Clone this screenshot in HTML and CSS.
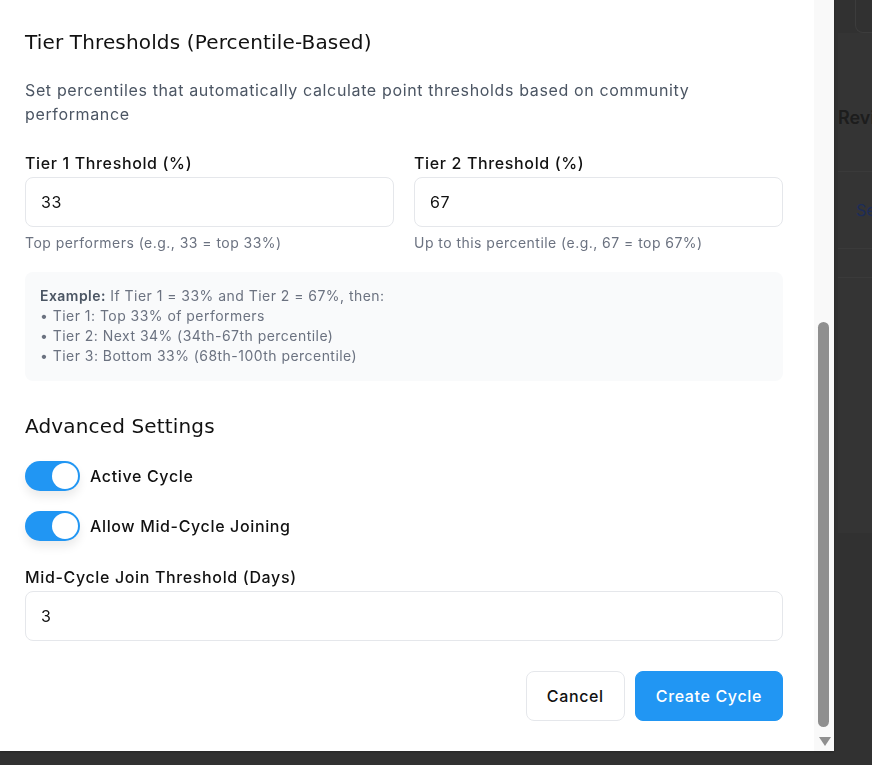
FILE: index.html
```html
<!DOCTYPE html>
<html lang="en">
<head>
<meta charset="utf-8">
<title>Create Cycle</title>
<link rel="stylesheet" href="styles.css">
</head>
<body>
  <div class="page">
    <div class="page-side"></div>
    <main class="page-main">
      <div class="page-card"></div>
      <div class="page-panel">
        <h2 class="page-panel-title">Reviews</h2>
        <div class="page-row"><a class="page-link">See all</a></div>
        <div class="page-row page-row-thin"></div>
      </div>
    </main>
  </div>

  <div class="backdrop"></div>

  <div class="modal" role="dialog" aria-label="Create Cycle">
    <div class="modal-scroll">
      <div class="modal-body">
        <header class="modal-header">
          <h2 class="modal-title">Create New Cycle</h2>
        </header>

        <section class="section">
          <h3 class="section-title">Basic Information</h3>
          <div class="field">
            <label class="label">Cycle Name</label>
            <input class="input" value="Q3 2025 Performance Cycle">
          </div>
          <div class="field">
            <label class="label">Description</label>
            <textarea class="input textarea">Quarterly performance cycle for the community.</textarea>
          </div>
          <div class="grid-2">
            <div class="field">
              <label class="label">Start Date</label>
              <input class="input" value="2025-07-01">
            </div>
            <div class="field">
              <label class="label">End Date</label>
              <input class="input" value="2025-09-30">
            </div>
          </div>
        </section>

        <section class="section">
          <h3 class="section-title">Point Settings</h3>
          <div class="grid-2">
            <div class="field">
              <label class="label">Points per Activity</label>
              <input class="input" value="10">
            </div>
            <div class="field">
              <label class="label">Bonus Points</label>
              <input class="input" value="5">
            </div>
          </div>
          <div class="grid-2">
            <div class="field">
              <label class="label">Minimum Points</label>
              <input class="input" value="0">
            </div>
            <div class="field">
              <label class="label">Maximum Points</label>
              <input class="input" value="1000">
            </div>
          </div>
        </section>

        <section class="section">
          <h3 class="section-title">Tier Thresholds (Percentile-Based)</h3>
          <p class="section-desc">Set percentiles that automatically calculate point thresholds based on community performance</p>
          <div class="grid-2 grid-tiers">
            <div class="field">
              <label class="label">Tier 1 Threshold (%)</label>
              <input class="input" value="33">
              <span class="hint">Top performers (e.g., 33 = top 33%)</span>
            </div>
            <div class="field">
              <label class="label">Tier 2 Threshold (%)</label>
              <input class="input" value="67">
              <span class="hint">Up to this percentile (e.g., 67 = top 67%)</span>
            </div>
          </div>
          <div class="example">
            <div><strong>Example:</strong> If Tier 1 = 33% and Tier 2 = 67%, then:</div>
            <div>• Tier 1: Top 33% of performers</div>
            <div>• Tier 2: Next 34% (34th-67th percentile)</div>
            <div>• Tier 3: Bottom 33% (68th-100th percentile)</div>
          </div>
        </section>

        <section class="section">
          <h3 class="section-title">Advanced Settings</h3>
          <div class="toggles">
            <label class="toggle-row">
              <span class="toggle"><span class="toggle-knob"></span></span>
              <span class="toggle-label">Active Cycle</span>
            </label>
            <label class="toggle-row">
              <span class="toggle"><span class="toggle-knob"></span></span>
              <span class="toggle-label">Allow Mid-Cycle Joining</span>
            </label>
          </div>
          <div class="field field-join">
            <label class="label">Mid-Cycle Join Threshold (Days)</label>
            <input class="input" value="3">
          </div>
        </section>

        <div class="actions">
          <button class="btn btn-cancel">Cancel</button>
          <button class="btn btn-primary">Create Cycle</button>
        </div>
      </div>
    </div>

    <div class="scrollbar" aria-hidden="true">
      <div class="scrollbar-btn"><span class="arrow-up"></span></div>
      <div class="scrollbar-track"><div class="scrollbar-thumb"></div></div>
      <div class="scrollbar-btn"><span class="arrow-down"></span></div>
    </div>
  </div>
</body>
</html>
```

FILE: styles.css
```css
* { box-sizing: border-box; }

html, body {
  margin: 0;
  height: 100%;
}

body {
  font-family: Inter, "Liberation Sans", sans-serif;
  letter-spacing: 0.04em;
  background: #626262;
  overflow: hidden;
}

/* underlying page (dimmed by the backdrop) */
.page {
  display: grid;
  grid-template-columns: 838px 1fr;
  min-height: 100vh;
}

.page-main {
  display: flex;
  flex-direction: column;
}

.page-card {
  height: 53px;
  margin: -20px 0 0 17px;
  border: 1px solid #787878;
  border-right: none;
  border-radius: 8px 0 0 8px;
}

.page-panel {
  background: #686868;
  height: 500px;
}

.page-panel-title {
  margin: 73px 0 0 0;
  height: 65px;
  font-size: 18px;
  font-weight: 600;
  letter-spacing: 0;
  color: #3a3a3a;
  line-height: 24px;
}

.page-row {
  height: 77px;
  border-top: 1px solid #747474;
  display: flex;
  align-items: center;
  padding-left: 18px;
}

.page-row-thin {
  height: 30px;
  border-bottom: 1px solid #747474;
}

.page-link {
  color: #3a58b0;
  font-size: 16px;
  letter-spacing: 0;
}

.backdrop {
  position: fixed;
  inset: 0;
  background: rgba(0, 0, 0, 0.5);
}

/* modal */
.modal {
  position: fixed;
  left: 0;
  top: -40px;
  width: 834px;
  height: 791px;
  background: #fff;
  display: flex;
  box-shadow: 0 1px 2px rgba(0, 0, 0, 0.25);
}

.modal-scroll {
  flex: 1;
  min-width: 0;
  display: flex;
  flex-direction: column-reverse;
  overflow-y: auto;
  scrollbar-width: none;
}

.modal-scroll::-webkit-scrollbar {
  display: none;
}

.scrollbar {
  width: 20px;
  display: flex;
  flex-direction: column;
  background: #f9f9f9;
}

.scrollbar-btn {
  height: 20px;
  flex: none;
  display: flex;
  align-items: center;
  justify-content: center;
  padding-left: 1px;
}

.arrow-down,
.arrow-up {
  width: 0;
  height: 0;
  border-left: 6px solid transparent;
  border-right: 6px solid transparent;
}

.arrow-down {
  border-top: 9px solid #8f8f8f;
}

.arrow-up {
  border-bottom: 9px solid #8f8f8f;
}

.scrollbar-track {
  flex: 1;
  display: flex;
  flex-direction: column;
  justify-content: flex-end;
  padding: 4px 5px 4px 4px;
}

.scrollbar-thumb {
  height: 405px;
  border-radius: 6px;
  background: #8f8f8f;
}

.modal-body {
  padding: 24px 31px 30px 25px;
}

.modal-header {
  margin-bottom: 24px;
}

.modal-title {
  margin: 0;
  font-family: "DejaVu Sans", sans-serif;
  font-size: 24px;
  line-height: 32px;
  font-weight: 400;
  letter-spacing: 0;
  color: #111;
}

.section + .section {
  margin-top: 33px;
}

.section-title {
  margin: 0;
  font-family: "DejaVu Sans", sans-serif;
  font-size: 20px;
  line-height: 24px;
  font-weight: 400;
  letter-spacing: 0.15px;
  color: #111;
}

.section-desc {
  margin: 24px 0 0 0;
  font-size: 16px;
  line-height: 24px;
  color: #4b5563;
}

.field {
  display: flex;
  flex-direction: column;
  margin-top: 24px;
}

.grid-2 {
  display: grid;
  grid-template-columns: 1fr 1fr;
  gap: 20px;
}

.grid-tiers .field {
  margin-top: 25px;
}

.label {
  font-size: 16px;
  line-height: 24px;
  font-weight: 500;
  color: #111;
  margin-bottom: 2px;
}

.input {
  height: 50px;
  padding: 0 15px;
  border: 1px solid #e5e7eb;
  border-radius: 8px;
  font-family: Inter, sans-serif;
  font-size: 16px;
  letter-spacing: 0.04em;
  color: #111;
  background: #fff;
  outline: none;
}

.textarea {
  height: 72px;
  padding-top: 12px;
  resize: none;
}

.hint {
  margin-top: 6px;
  font-size: 14px;
  line-height: 20px;
  letter-spacing: 0.033em;
  color: #6b7280;
}

.example {
  margin-top: 19px;
  padding: 14px 15px 15px;
  background: #f9fafb;
  border-radius: 8px;
  font-size: 14px;
  line-height: 20px;
  letter-spacing: 0.033em;
  color: #6b7280;
}

.example strong {
  font-weight: 600;
  color: #4b5563;
}

.toggles {
  display: flex;
  flex-direction: column;
  gap: 20px;
  margin-top: 23px;
}

.toggle-row {
  display: flex;
  align-items: center;
  gap: 10px;
}

.toggle {
  width: 55px;
  height: 30px;
  border-radius: 15px;
  background: #2196f3;
  display: flex;
  align-items: center;
  justify-content: flex-end;
  padding: 0 2px;
  box-shadow: 0 6px 10px rgba(0, 0, 0, 0.08);
}

.toggle-knob {
  width: 26px;
  height: 26px;
  border-radius: 50%;
  background: #fff;
}

.toggle-label {
  font-size: 16px;
  line-height: 24px;
  font-weight: 500;
  color: #111;
}

.actions {
  display: flex;
  justify-content: flex-end;
  gap: 10px;
  margin-top: 30px;
}

.btn {
  height: 50px;
  padding: 0 20px;
  border-radius: 8px;
  font-family: Inter, sans-serif;
  font-size: 16px;
  font-weight: 500;
  letter-spacing: 0.04em;
  cursor: pointer;
}

.btn-cancel {
  background: #fff;
  border: 1px solid #e5e7eb;
  color: #111;
}

.btn-primary {
  background: #2196f3;
  border: 1px solid #2196f3;
  color: #fff;
}
```
